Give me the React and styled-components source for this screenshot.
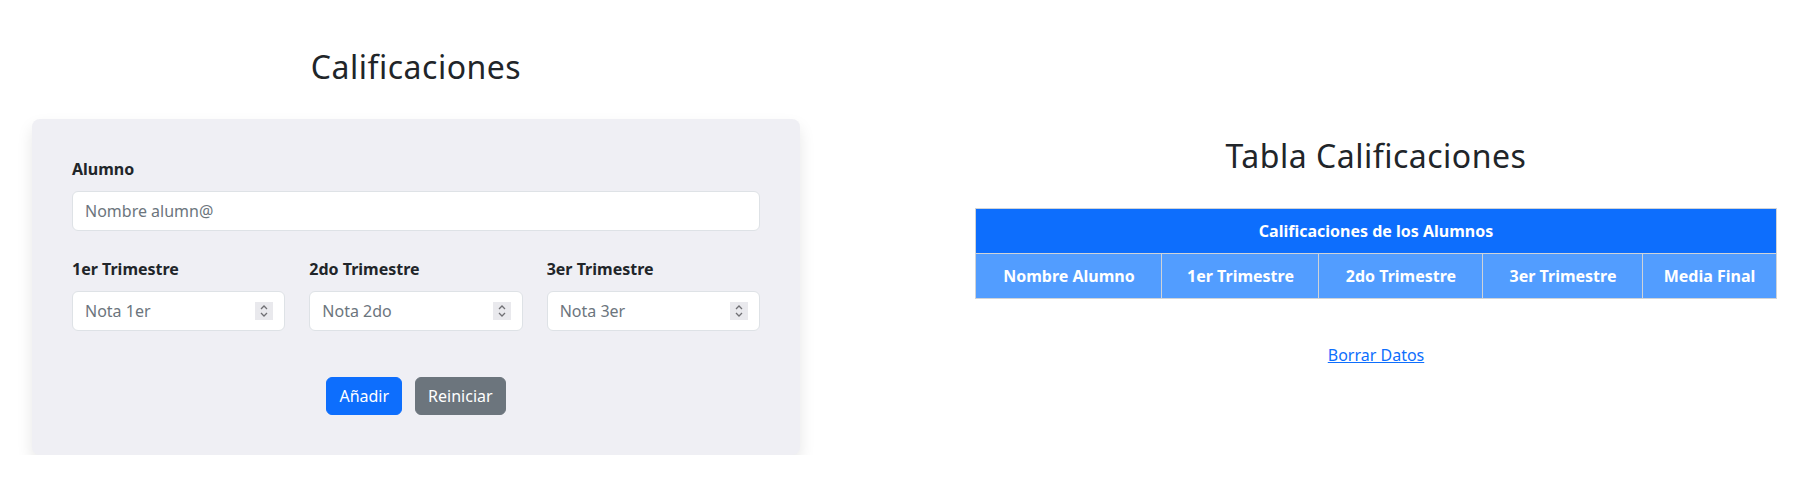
import { createGlobalStyle } from "styled-components";
import styled from "styled-components";

const GlobalStyle = createGlobalStyle`
  body {
    margin: 0;
    background: #ffffff;
    color: #212529;
    font-family: "Noto Sans", "Open Sans", sans-serif;
    font-size: 16px;
    line-height: 1.5;
  }
  * {
    box-sizing: border-box;
  }
`;

const Page = styled.main`
  display: grid;
  grid-template-columns: 768px 800px;
  column-gap: 176px;
  align-items: center;
  padding: 48px 0 0 32px;
`;

const Title = styled.h2`
  margin: 0 0 33px;
  font-size: 32px;
  font-weight: 400;
  line-height: 1.2;
  letter-spacing: 0.5px;
  text-align: center;
`;

const Card = styled.form`
  background: #efeff4;
  border-radius: 8px;
  box-shadow: 0 8px 16px rgba(0, 0, 0, 0.1);
  padding: 38px 40px 40px;
`;

const Label = styled.label`
  display: block;
  margin-bottom: 10px;
  font-weight: 700;
  font-size: 16px;
  line-height: 24px;
`;

const TextInput = styled.input`
  display: block;
  width: 100%;
  height: 40px;
  padding: 0 12px;
  border: 1px solid #dee2e6;
  border-radius: 6px;
  background: #fff;
  font: inherit;
  color: #212529;
  outline: none;

  &::placeholder {
    color: #6c757d;
  }
`;

const GradeRow = styled.div`
  display: grid;
  grid-template-columns: repeat(3, minmax(0, 1fr));
  column-gap: 24px;
  margin-top: 26px;
`;

const NumberBox = styled.div`
  display: flex;
  align-items: center;
  height: 40px;
  padding: 0 11px 0 12px;
  border: 1px solid #dee2e6;
  border-radius: 6px;
  background: #fff;
`;

const NumberInput = styled.input`
  flex: 1;
  width: 0;
  min-width: 0;
  border: none;
  padding: 0;
  background: transparent;
  font: inherit;
  color: #212529;
  outline: none;

  &::placeholder {
    color: #6c757d;
  }
`;

const Spinner = styled.span`
  display: flex;
  align-items: center;
  justify-content: center;
  flex-shrink: 0;
  width: 18px;
  height: 18px;
  background: #e9e9ed;
`;

const Actions = styled.div`
  display: flex;
  justify-content: center;
  gap: 13px;
  margin-top: 46px;
`;

const Button = styled.button`
  padding: 6px 12px;
  border: 1px solid ${(p) => (p.$variant === "secondary" ? "#6c757d" : "#0d6efd")};
  border-radius: 6px;
  background: ${(p) => (p.$variant === "secondary" ? "#6c757d" : "#0d6efd")};
  color: #fff;
  font: inherit;
  line-height: 24px;
  cursor: pointer;
`;

const TableSide = styled.section`
  display: flex;
  flex-direction: column;
  align-items: center;
`;

const Table = styled.table`
  width: 800px;
  border-collapse: collapse;
  table-layout: fixed;
  color: #fff;
  font-weight: 700;
  text-align: center;
`;

const HeadCell = styled.th`
  height: 45px;
  padding: 0 8px;
  border: 1px solid #cfd3d8;
  background: ${(p) => (p.$main ? "#0d6efd" : "#529dff")};
  font-weight: 700;
  font-size: 16px;
`;

const ClearLink = styled.a`
  margin-top: 44px;
  color: #0d6efd;
  text-decoration: underline;
  line-height: 24px;
  cursor: pointer;
`;

const SpinIcon = () => (
  <svg width="10" height="16" viewBox="0 0 10 16" fill="none" stroke="#707074" strokeWidth="1.3">
    <path d="M2 6 L5 3 L8 6" />
    <path d="M2 10 L5 13 L8 10" />
  </svg>
);

const grades = [
  { id: "t1", label: "1er Trimestre", placeholder: "Nota 1er" },
  { id: "t2", label: "2do Trimestre", placeholder: "Nota 2do" },
  { id: "t3", label: "3er Trimestre", placeholder: "Nota 3er" },
];

const columns = [
  { name: "Nombre Alumno", width: 186 },
  { name: "1er Trimestre", width: 157 },
  { name: "2do Trimestre", width: 164 },
  { name: "3er Trimestre", width: 160 },
  { name: "Media Final", width: 133 },
];

export default function App() {
  return (
    <>
      <GlobalStyle />
      <Page>
        <section>
          <Title>Calificaciones</Title>
          <Card onSubmit={(e) => e.preventDefault()}>
            <Label htmlFor="alumno">Alumno</Label>
            <TextInput id="alumno" type="text" placeholder="Nombre alumn@" />
            <GradeRow>
              {grades.map((g) => (
                <div key={g.id}>
                  <Label htmlFor={g.id}>{g.label}</Label>
                  <NumberBox>
                    <NumberInput id={g.id} type="text" inputMode="numeric" placeholder={g.placeholder} />
                    <Spinner>
                      <SpinIcon />
                    </Spinner>
                  </NumberBox>
                </div>
              ))}
            </GradeRow>
            <Actions>
              <Button type="submit">Añadir</Button>
              <Button type="reset" $variant="secondary">
                Reiniciar
              </Button>
            </Actions>
          </Card>
        </section>
        <TableSide>
          <Title>Tabla Calificaciones</Title>
          <Table>
            <colgroup>
              {columns.map((c) => (
                <col key={c.name} style={{ width: c.width }} />
              ))}
            </colgroup>
            <thead>
              <tr>
                <HeadCell $main colSpan={5}>
                  Calificaciones de los Alumnos
                </HeadCell>
              </tr>
              <tr>
                {columns.map((c) => (
                  <HeadCell key={c.name}>{c.name}</HeadCell>
                ))}
              </tr>
            </thead>
          </Table>
          <ClearLink>Borrar Datos</ClearLink>
        </TableSide>
      </Page>
    </>
  );
}
